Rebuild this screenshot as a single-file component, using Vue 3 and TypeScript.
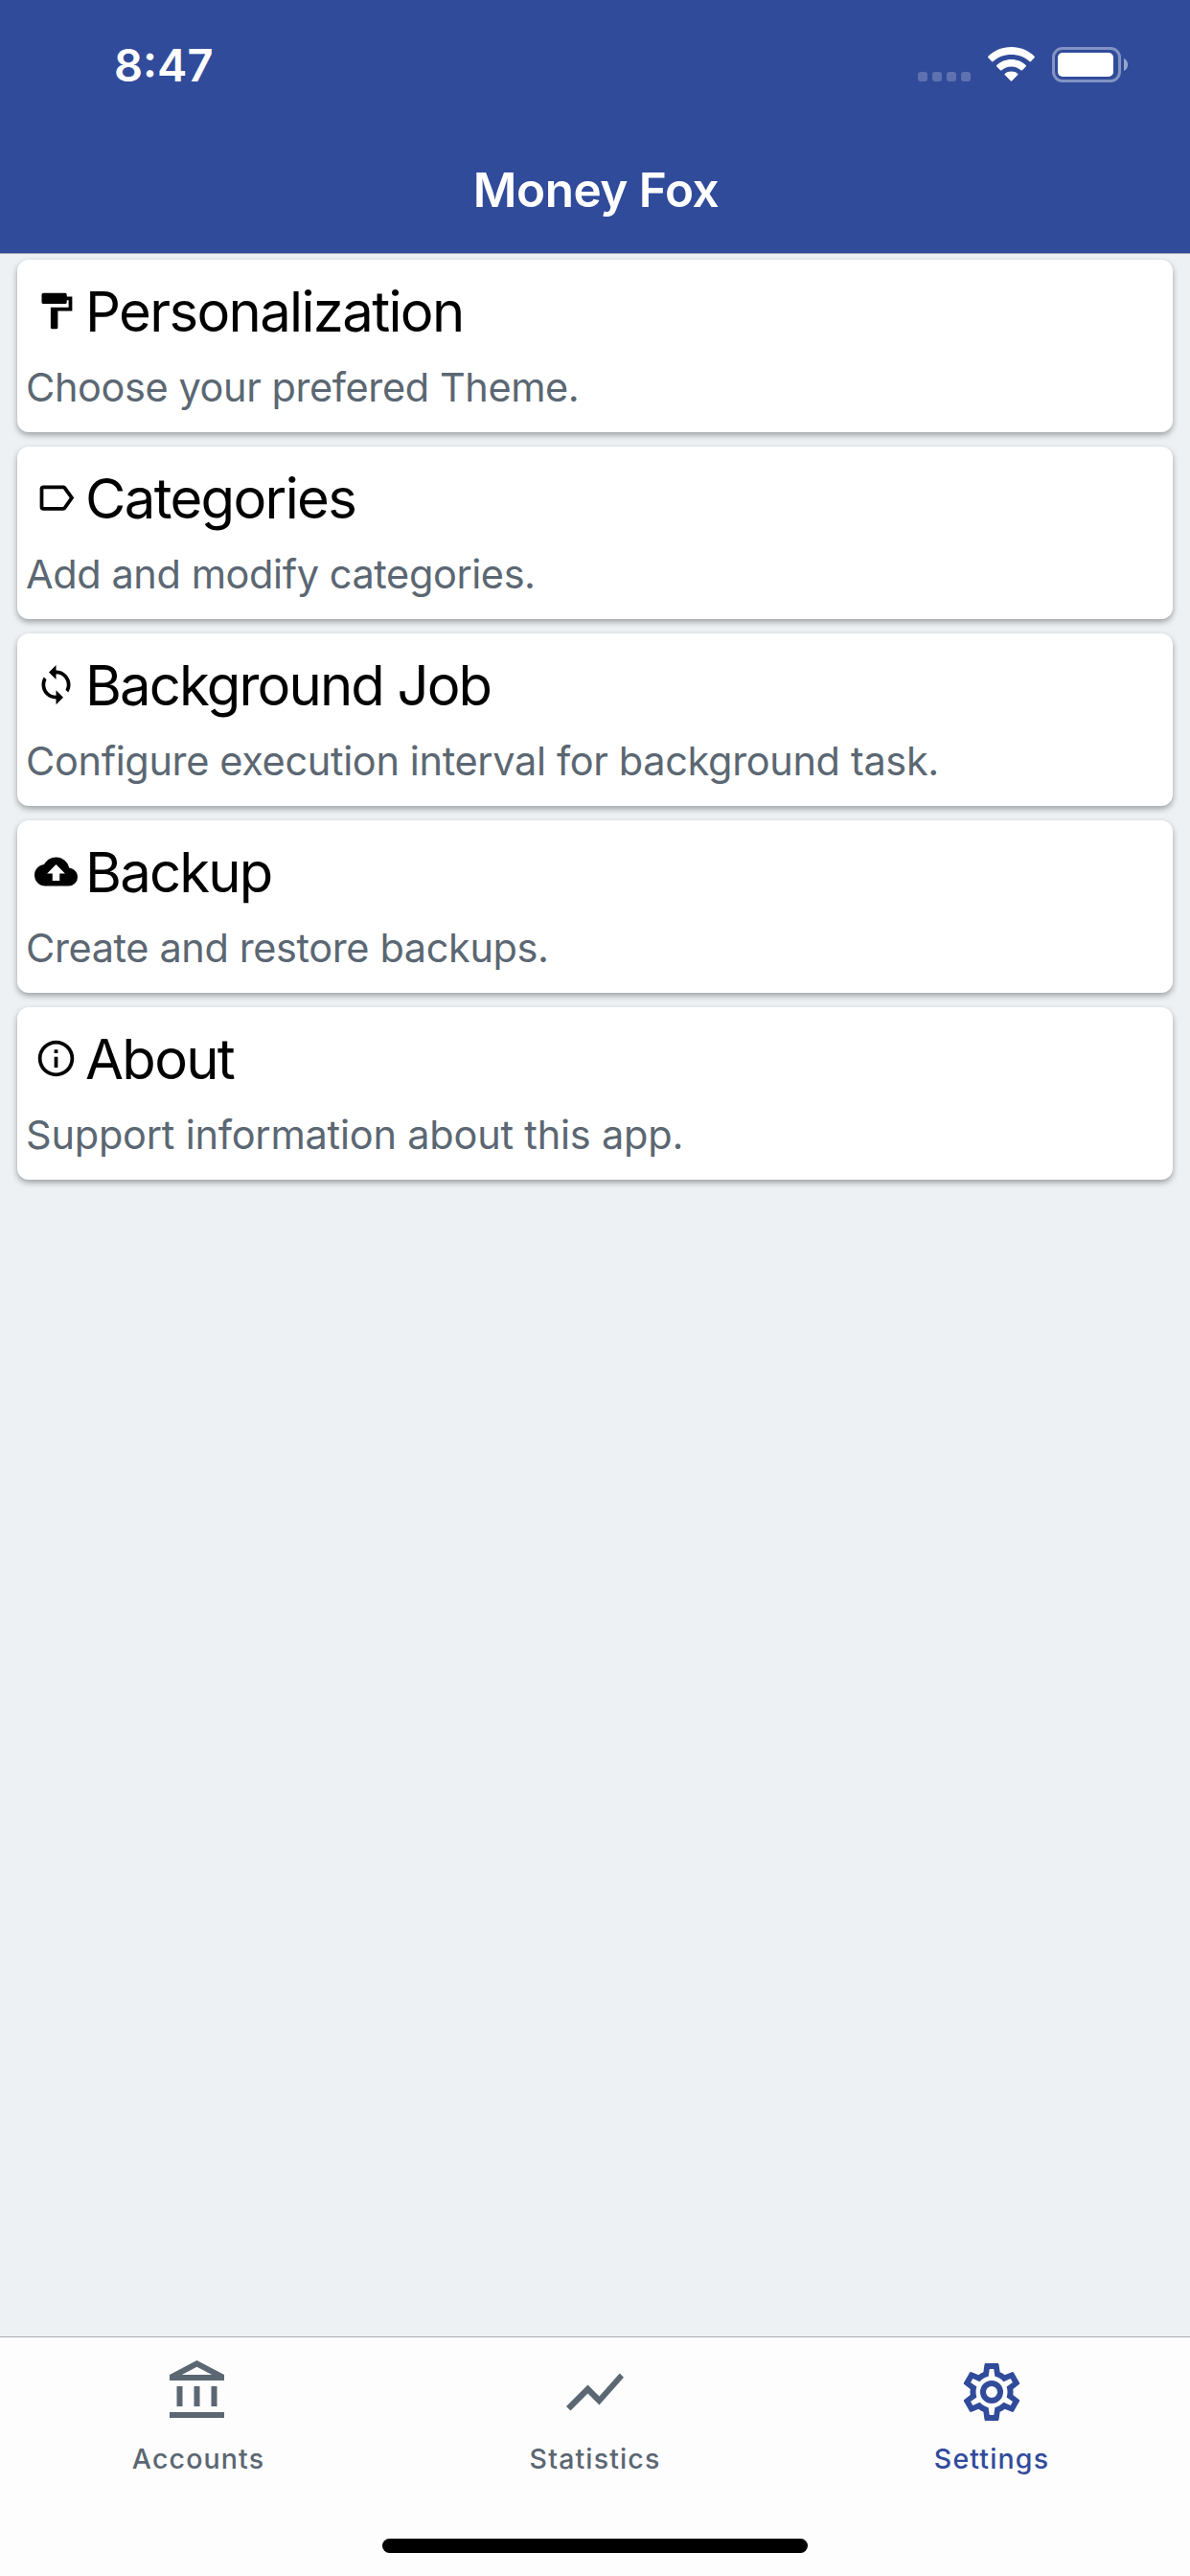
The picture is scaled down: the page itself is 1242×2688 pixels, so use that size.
<script setup lang="ts">
interface Entry {
  title: string
  text: string
  icon: string
  titleSpacing: number
  textSpacing: number
}

interface Tab {
  label: string
  icon: string
  active: boolean
}

const entries: Entry[] = [
  {
    title: 'Personalization',
    text: 'Choose your prefered Theme.',
    icon: 'M18,4V3A1,1 0 0,0 17,2H5A1,1 0 0,0 4,3V7A1,1 0 0,0 5,8H17A1,1 0 0,0 18,7V6H19V10H9V21A1,1 0 0,0 10,22H12A1,1 0 0,0 13,21V12H21V4H18Z',
    titleSpacing: -1.65,
    textSpacing: -0.42,
  },
  {
    title: 'Categories',
    text: 'Add and modify categories.',
    icon: 'M16,17H5V7H16L19.55,12M17.63,5.84C17.27,5.33 16.67,5 16,5H5A2,2 0 0,0 3,7V17A2,2 0 0,0 5,19H16C16.67,19 17.27,18.66 17.63,18.15L22,12L17.63,5.84Z',
    titleSpacing: -1.65,
    textSpacing: -0.42,
  },
  {
    title: 'Background Job',
    text: 'Configure execution interval for background task.',
    icon: 'M12,18A6,6 0 0,1 6,12C6,11 6.25,10.03 6.7,9.2L5.24,7.74C4.46,8.97 4,10.43 4,12A8,8 0 0,0 12,20V23L16,19L12,15M12,4V1L8,5L12,9V6A6,6 0 0,1 18,12C18,13 17.75,13.97 17.3,14.8L18.76,16.26C19.54,15.03 20,13.57 20,12A8,8 0 0,0 12,4Z',
    titleSpacing: -1.85,
    textSpacing: -0.36,
  },
  {
    title: 'Backup',
    text: 'Create and restore backups.',
    icon: 'M14,13V17H10V13H7L12,8L17,13M19.35,10.03C18.67,6.59 15.64,4 12,4C9.11,4 6.6,5.64 5.35,8.03C2.34,8.36 0,10.9 0,14A6,6 0 0,0 6,20H19A5,5 0 0,0 24,15C24,12.36 21.95,10.22 19.35,10.03Z',
    titleSpacing: -1.8,
    textSpacing: -0.4,
  },
  {
    title: 'About',
    text: 'Support information about this app.',
    icon: 'M11,9H13V7H11M12,20C7.59,20 4,16.41 4,12C4,7.59 7.59,4 12,4C16.41,4 20,7.59 20,12C20,16.41 16.41,20 12,20M12,2A10,10 0 0,0 2,12A10,10 0 0,0 12,22A10,10 0 0,0 22,12A10,10 0 0,0 12,2M11,17H13V11H11V17Z',
    titleSpacing: -1.7,
    textSpacing: -0.22,
  },
]

const tabs: Tab[] = [
  {
    label: 'Accounts',
    icon: 'M6.5 10h-2v7h2v-7zm6 0h-2v7h2v-7zm8.5 9H2v2h19v-2zm-2.5-9h-2v7h2v-7zm-7-6.74L16.71 6H6.29l5.21-2.74m0-2.26L2 6v2h19V6l-9.5-5z',
    active: false,
  },
  {
    label: 'Statistics',
    icon: 'M3.5 18.49l6-6.01 4 4L22 6.92l-1.41-1.41-7.09 7.97-4-4L2 16.99z',
    active: false,
  },
  {
    label: 'Settings',
    icon: 'M12,8A4,4 0 0,1 16,12A4,4 0 0,1 12,16A4,4 0 0,1 8,12A4,4 0 0,1 12,8M12,10A2,2 0 0,0 10,12A2,2 0 0,0 12,14A2,2 0 0,0 14,12A2,2 0 0,0 12,10M10,22C9.75,22 9.54,21.82 9.5,21.58L9.13,18.93C8.5,18.68 7.96,18.34 7.44,17.94L4.95,18.95C4.73,19.03 4.46,18.95 4.34,18.73L2.34,15.27C2.21,15.05 2.27,14.78 2.46,14.63L4.57,12.97L4.5,12L4.57,11L2.46,9.37C2.27,9.22 2.21,8.95 2.34,8.73L4.34,5.27C4.46,5.05 4.73,4.96 4.95,5.05L7.44,6.05C7.96,5.66 8.5,5.32 9.13,5.07L9.5,2.42C9.54,2.18 9.75,2 10,2H14C14.25,2 14.46,2.18 14.5,2.42L14.87,5.07C15.5,5.32 16.04,5.66 16.56,6.05L19.05,5.05C19.27,4.96 19.54,5.05 19.66,5.27L21.66,8.73C21.79,8.95 21.73,9.22 21.54,9.37L19.43,11L19.5,12L19.43,13L21.54,14.63C21.73,14.78 21.79,15.05 21.66,15.27L19.66,18.73C19.54,18.95 19.27,19.04 19.05,18.95L16.56,17.95C16.04,18.34 15.5,18.68 14.87,18.93L14.5,21.58C14.46,21.82 14.25,22 14,22H10M11.25,4L10.88,6.61C9.68,6.86 8.62,7.5 7.85,8.39L5.44,7.35L4.69,8.65L6.8,10.2C6.4,11.37 6.4,12.64 6.8,13.8L4.68,15.36L5.43,16.66L7.86,15.62C8.63,16.5 9.68,17.14 10.87,17.38L11.24,20H12.76L13.13,17.39C14.32,17.14 15.37,16.5 16.14,15.62L18.57,16.66L19.32,15.36L17.2,13.81C17.6,12.64 17.6,11.37 17.2,10.2L19.31,8.65L18.56,7.35L16.15,8.39C15.38,7.5 14.32,6.86 13.12,6.62L12.75,4H11.25Z',
    active: true,
  },
]
</script>

<template>
  <div class="screen">
    <header class="header">
      <div class="status">
        <span class="time">8:47</span>
        <div class="indicators">
          <div class="cellular"><i v-for="n in 4" :key="n"></i></div>
          <svg class="wifi" viewBox="0 0 49 36">
            <path d="M24.5 0C34 0 42.500 3.700 48.600 9.700Q49.300 10.500 48.600 11.300L45 15Q44.200 15.800 43.400 15C38.500 10.500 31.800 8 24.500 8S10.500 10.500 5.600 15Q4.800 15.800 4 15L.4 11.300Q-.3 10.500 .4 9.700C6.500 3.700 15 0 24.500 0Z" />
            <path d="M24.500 12.900C30.400 12.900 35.800 15.200 39.700 18.900Q40.500 19.700 39.700 20.500L36 24.200Q35.300 24.900 34.500 24.200C31.800 21.900 28.400 20.500 24.500 20.500S17.200 21.900 14.500 24.200Q13.700 24.900 13 24.200L9.300 20.500Q8.500 19.700 9.300 18.900C13.200 15.200 18.600 12.900 24.500 12.900Z" />
            <path d="M24.500 25.400C27.100 25.400 29.400 26.300 31.100 27.700Q31.900 28.500 31.100 29.300L25.300 35.300Q24.500 36.100 23.700 35.300L17.900 29.300Q17.100 28.500 17.900 27.700C19.600 26.300 21.900 25.400 24.500 25.400Z" />
          </svg>
          <svg class="battery" viewBox="0 0 79 37">
            <rect x="1.500" y="1.500" width="69" height="34" rx="9.500" fill="none" stroke="#fff" stroke-opacity=".4" stroke-width="3" />
            <rect x="6" y="6" width="58" height="25" rx="5" />
            <path d="M75 12C77.500 13 79 15.500 79 18.500S77.500 24 75 25Z" opacity=".5" />
          </svg>
        </div>
      </div>
      <h1 class="heading">Money Fox</h1>
    </header>

    <main class="list">
      <section v-for="entry in entries" :key="entry.title" class="card">
        <div class="card-head">
          <svg class="card-icon" viewBox="0 0 24 24"><path :d="entry.icon" /></svg>
          <h2 :style="{ letterSpacing: entry.titleSpacing + 'px' }">{{ entry.title }}</h2>
        </div>
        <p :style="{ letterSpacing: entry.textSpacing + 'px' }">{{ entry.text }}</p>
      </section>
    </main>

    <nav class="tabs">
      <div class="tab-row">
        <div v-for="tab in tabs" :key="tab.label" class="tab" :class="{ active: tab.active }">
          <svg viewBox="0 0 24 24"><path :d="tab.icon" /></svg>
          <span>{{ tab.label }}</span>
        </div>
      </div>
      <div class="home"></div>
    </nav>
  </div>
</template>

<style>
body {
  margin: 0;
}
</style>

<style scoped>
.screen {
  width: 1242px;
  height: 2688px;
  display: flex;
  flex-direction: column;
  background: #edf1f4;
  font-family: Inter, "Liberation Sans", sans-serif;
  overflow: hidden;
}

.header {
  box-sizing: border-box;
  height: 265px;
  flex: none;
  background: #314b9b;
  border-bottom: 1px solid #a3a5ab;
  color: #fff;
}

.status {
  height: 132px;
  display: flex;
  justify-content: space-between;
  padding: 0 65px 0 119px;
}

.time {
  font-size: 47px;
  line-height: 56px;
  font-weight: 600;
  padding-top: 40px;
}

.indicators {
  display: flex;
  align-items: flex-start;
  padding-top: 49px;
  fill: #fff;
}

.cellular {
  display: flex;
  gap: 5px;
  margin: 26px 18px 0 0;
}

.cellular i {
  width: 10px;
  height: 10px;
  border-radius: 3px;
  background: rgba(255, 255, 255, 0.22);
}

.wifi {
  width: 49px;
  height: 36px;
  margin-right: 18px;
}

.battery {
  width: 79px;
  height: 37px;
}

.heading {
  margin: 0;
  padding-left: 2px;
  text-align: center;
  font-size: 49.5px;
  line-height: 132px;
  font-weight: 600;
  letter-spacing: -0.5px;
}

.list {
  flex: 1;
  display: flex;
  flex-direction: column;
  gap: 15px;
  padding: 5.6px 18px 0;
}

.card {
  box-sizing: border-box;
  height: 180px;
  flex: none;
  padding: 0 10px 0 9px;
  border-radius: 12px;
  background: #fff;
  box-shadow: 0 3px 6px rgba(0, 0, 0, 0.34);
}

.card-head {
  display: flex;
  align-items: center;
  height: 108px;
  padding-left: 9px;
}

.card-icon {
  width: 45px;
  height: 45px;
  margin-right: 8px;
}

h2 {
  margin: 0;
  font-size: 58px;
  line-height: 72px;
  font-weight: 400;
  color: #000;
  white-space: nowrap;
}

p {
  margin: 0;
  font-size: 41.5px;
  line-height: 50px;
  color: #5b6772;
  white-space: nowrap;
}

.tabs {
  box-sizing: border-box;
  height: 250px;
  flex: none;
  border-top: 1px solid #a6a9ad;
  background: #fdfdfe;
  display: flex;
  flex-direction: column;
  justify-content: space-between;
  align-items: center;
  padding: 21px 0 24px;
}

.tab-row {
  display: flex;
  width: 1242px;
}

.tab {
  flex: 1;
  display: flex;
  flex-direction: column;
  align-items: center;
  color: #5b6772;
  fill: currentColor;
}

.tab.active {
  color: #314b9b;
}

.tab svg {
  width: 72px;
  height: 72px;
}

.tab span {
  margin-top: 16px;
  font-size: 28.5px;
  line-height: 36px;
  font-weight: 500;
  letter-spacing: 1.15px;
}

.home {
  width: 444px;
  height: 15px;
  border-radius: 8px;
  background: #000;
}
</style>
